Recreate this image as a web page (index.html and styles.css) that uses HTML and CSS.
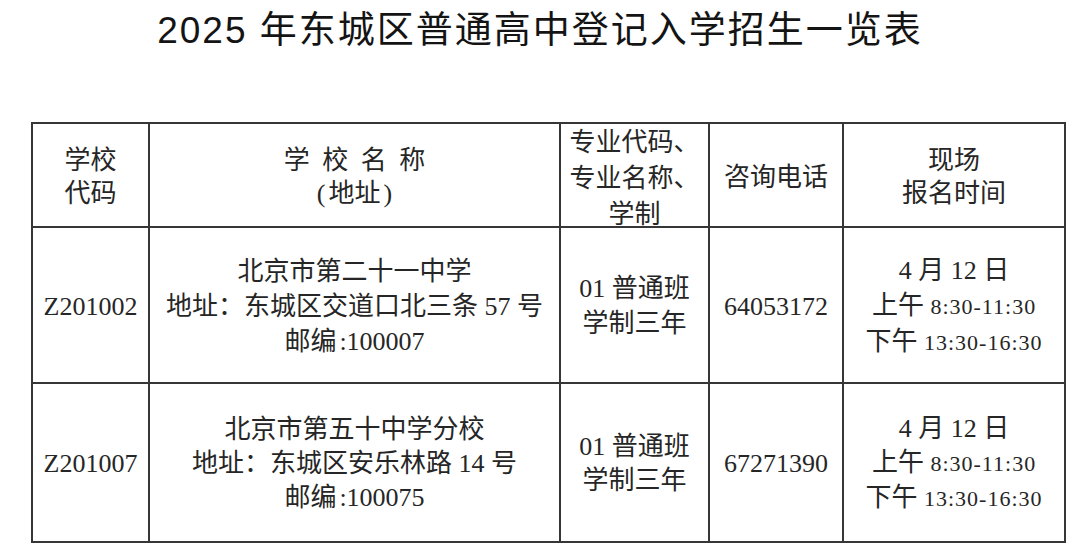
FILE: index.html
```html
<!DOCTYPE html>
<html lang="zh-CN">
<head>
<meta charset="utf-8">
<title>2025年东城区普通高中登记入学招生一览表</title>
<link rel="stylesheet" href="styles.css">
</head>
<body>
<header class="top">
  <h1 class="title">2025 年东城区普通高中登记入学招生一览表</h1>
</header>
<table class="sheet">
  <colgroup>
    <col class="c-code">
    <col class="c-name">
    <col class="c-major">
    <col class="c-phone">
    <col class="c-time">
  </colgroup>
  <thead>
    <tr class="head-row">
      <th>学校<br>代码</th>
      <th><span class="spaced">学 校 名 称</span><br><span class="paren">(</span>地址<span class="paren">)</span></th>
      <th class="major-head"><div class="major-box">专业代码、<br>专业名称、<br>学制</div></th>
      <th>咨询电话</th>
      <th>现场<br>报名时间</th>
    </tr>
  </thead>
  <tbody>
    <tr class="row-a">
      <td class="num">Z201002</td>
      <td>北京市第二十一中学<br>地址：东城区交道口北三条 <span class="num">57</span> 号<br>邮编<span class="num colon">:100007</span></td>
      <td><span class="num">01</span> 普通班<br>学制三年</td>
      <td class="num">64053172</td>
      <td class="time"><span class="num">4</span> 月 <span class="num">12</span> 日<br>上午 <span class="clock">8:30-11:30</span><br>下午 <span class="clock">13:30-16:30</span></td>
    </tr>
    <tr class="row-b">
      <td class="num">Z201007</td>
      <td>北京市第五十中学分校<br>地址：东城区安乐林路 <span class="num">14</span> 号<br>邮编<span class="num colon">:100075</span></td>
      <td><span class="num">01</span> 普通班<br>学制三年</td>
      <td class="num">67271390</td>
      <td class="time"><span class="num">4</span> 月 <span class="num">12</span> 日<br>上午 <span class="clock">8:30-11:30</span><br>下午 <span class="clock">13:30-16:30</span></td>
    </tr>
  </tbody>
</table>
</body>
</html>
```

FILE: styles.css
```css
html, body {
  margin: 0;
  padding: 0;
  background: #ffffff;
}

body {
  width: 1080px;
  height: 547px;
  overflow: hidden;
  font-family: "Noto Sans CJK SC", "Liberation Sans", sans-serif;
  color: #222;
}

.top {
  height: 122px;
  box-sizing: border-box;
  padding-top: 9px;
}

.title {
  margin: 0;
  text-align: center;
  font-family: "Liberation Sans", "Noto Sans CJK SC", sans-serif;
  font-weight: 400;
  font-size: 37px;
  line-height: 44px;
  letter-spacing: 2px;
  color: #141414;
}

.sheet {
  margin-left: 31px;
  width: 1033px;
  table-layout: fixed;
  border-collapse: collapse;
  font-family: "Liberation Serif", "Noto Sans CJK SC", serif;
  font-size: 26px;
}

.c-code { width: 117px; }
.c-name { width: 411px; }
.c-major { width: 149px; }
.c-phone { width: 134px; }
.c-time { width: 222px; }

.sheet th,
.sheet td {
  border: 2px solid #363636;
  padding: 0;
  text-align: center;
  vertical-align: middle;
  font-weight: 400;
  color: #262626;
  overflow: visible;
  white-space: nowrap;
}

.head-row { height: 104px; }
.head-row th {
  line-height: 33px;
  padding-top: 4px;
}
.head-row th.major-head {
  padding-top: 0;
}

.major-box {
  height: 100px;
  line-height: 36px;
  padding-top: 0;
  overflow: visible;
}

.row-a { height: 156px; }
.row-b { height: 159px; }

.sheet td {
  line-height: 35px;
  padding-top: 2px;
}

.row-b td { line-height: 34px; }

.spaced { word-spacing: 6px; }

.paren {
  font-family: "Liberation Serif", serif;
  padding: 0 3px;
}

.num {
  font-family: "Liberation Serif", serif;
}

.colon { padding-left: 3px; }

.time { line-height: 34px; }

.clock {
  font-family: "Liberation Serif", serif;
  font-size: 22px;
  letter-spacing: 1px;
}
```
